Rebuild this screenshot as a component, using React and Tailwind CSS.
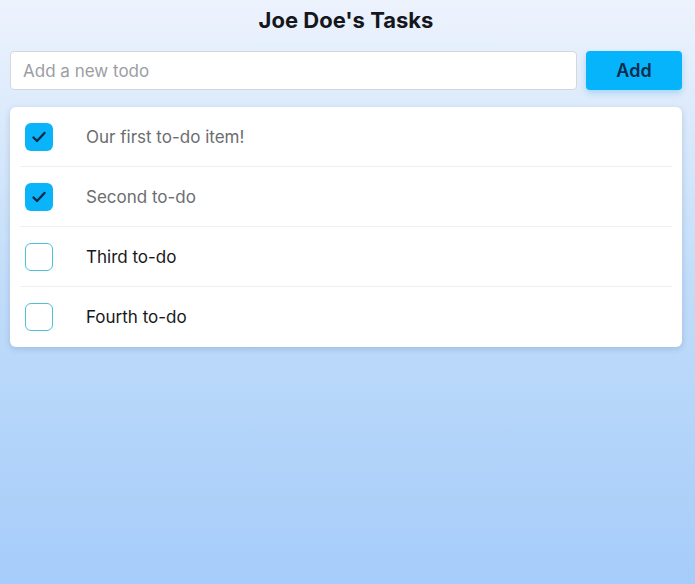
import React from "react";

const todos = [
  { text: "Our first to-do item!", done: true },
  { text: "Second to-do", done: true },
  { text: "Third to-do", done: false },
  { text: "Fourth to-do", done: false },
];

function Check() {
  return (
    <svg width="16" height="16" viewBox="0 0 16 16" fill="none">
      <path d="M2.5 8.5 L6 12 L13.5 4" stroke="#0f2a4a" strokeWidth="2.4" strokeLinecap="round" strokeLinejoin="round" />
    </svg>
  );
}

export default function App() {
  return (
    <div
      className="h-[584px] w-full bg-gradient-to-b from-[#edf3fd] via-[#c0dcf9] to-[#a6ccfa] pl-[10px] pr-[13px]"
      style={{ fontFamily: "Inter, 'Open Sans', sans-serif" }}
    >
      <h1 className="pt-[5px] text-center text-[22px] font-bold leading-[30px] text-[#15171c]">Joe Doe's Tasks</h1>
      <div className="mt-[16px] flex gap-[9px]">
        <input
          className="h-[39px] flex-1 rounded-[4px] border border-[#d4d7dc] bg-white px-[12px] text-[17px] text-[#222] placeholder:text-[#9b9ea3] outline-none"
          placeholder="Add a new todo"
        />
        <button className="h-[39px] w-[96px] rounded-[4px] bg-[#05b4fb] text-[18px] font-semibold text-[#0f2a4a] shadow-[0_3px_6px_rgba(5,140,220,0.25)]">
          Add
        </button>
      </div>
      <div className="mt-[17px] rounded-[6px] bg-white px-[10px] shadow-[0_2px_6px_rgba(40,60,100,0.18)]">
        {todos.map((t, i) => (
          <div
            key={i}
            className={`flex h-[60px] items-center ${i < todos.length - 1 ? "border-b border-[#eeeff1]" : ""}`}
          >
            {t.done ? (
              <div className="ml-[5px] flex h-[28px] w-[28px] items-center justify-center rounded-[6px] bg-[#0ab4fb]">
                <Check />
              </div>
            ) : (
              <div className="ml-[5px] h-[28px] w-[28px] rounded-[6px] border border-[#4cc2d8] bg-white" />
            )}
            <span className={`ml-[33px] pt-[2px] text-[17px] ${t.done ? "text-[#6b6d70]" : "text-[#17181a]"}`}>{t.text}</span>
          </div>
        ))}
      </div>
    </div>
  );
}
